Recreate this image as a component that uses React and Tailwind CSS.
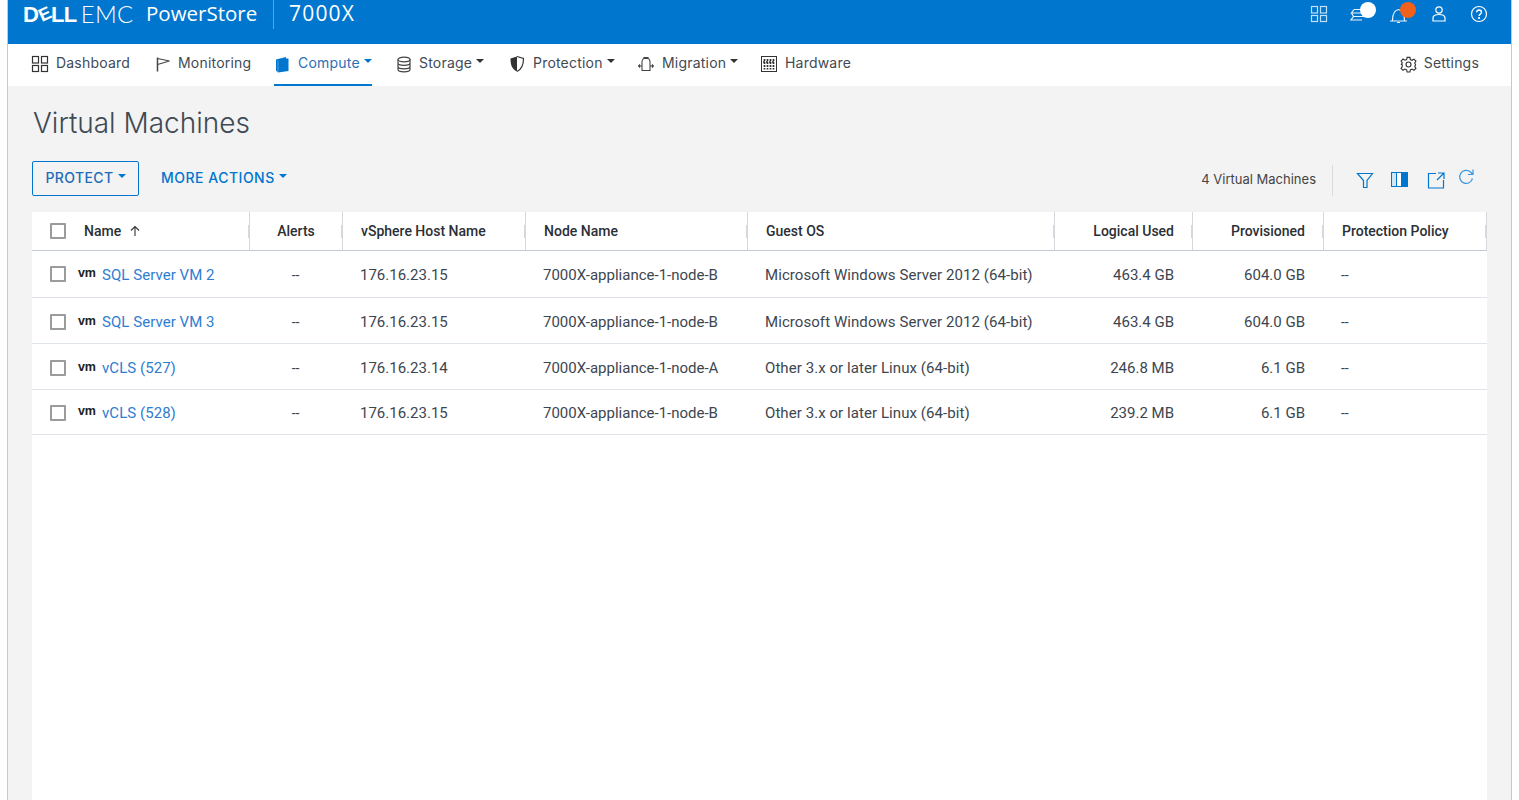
import React from "react";

const Caret = ({ c = "border-t-[#333]", t = "top-[-2px]" }) => (
  <span className={`inline-block w-0 h-0 border-x-[4px] border-x-transparent border-t-[4px] ${c} ml-[4px] relative ${t}`} />
);

const S = ({ children, w = 20, h = 20, vb = "0 0 20 20", color = "#333", sw = 1.2, cls = "" }) => (
  <svg width={w} height={h} viewBox={vb} fill="none" stroke={color} strokeWidth={sw} className={`shrink-0 ${cls}`}>{children}</svg>
);

const Grid4 = ({ color }) => (
  <S color={color} w={18} h={18} vb="0 0 18 18">
    <rect x="1.5" y="1.5" width="6" height="6.5" /><rect x="10.5" y="1.5" width="6" height="6.5" />
    <rect x="1.5" y="10.5" width="6" height="6" /><rect x="10.5" y="10.5" width="6" height="6" />
  </S>
);

const Nav = ({ icon, label, caret, active, gap = "gap-[7px]" }) => (
  <div className={`h-full flex items-center ${gap} border-b-2 ${active ? "border-[#0076ce] text-[#2c6fb5]" : "border-transparent text-[#3f4a55]"}`}>
    <span className="block">{icon}</span>
    <span className="flex items-center relative top-[-2px] tracking-[0.2px]">{label}{caret && <Caret t="top-[-1px]" c={active ? "border-t-[#0076ce]" : "border-t-[#333]"} />}</span>
  </div>
);

const columns = "grid-cols-[218px_93px_183px_222px_307px_138px_131px_163px]";

const rows = [
  ["SQL Server VM 2", "176.16.23.15", "7000X-appliance-1-node-B", "Microsoft Windows Server 2012 (64-bit)", "463.4 GB", "604.0 GB", "h-[47px] pt-[2px]", "top-[-1px]"],
  ["SQL Server VM 3", "176.16.23.15", "7000X-appliance-1-node-B", "Microsoft Windows Server 2012 (64-bit)", "463.4 GB", "604.0 GB", "h-[46px] pt-[4px]", "top-[-1px]"],
  ["vCLS (527)", "176.16.23.14", "7000X-appliance-1-node-A", "Other 3.x or later Linux (64-bit)", "246.8 MB", "6.1 GB", "h-[46px] pt-[4px]", "top-[-1px]"],
  ["vCLS (528)", "176.16.23.15", "7000X-appliance-1-node-B", "Other 3.x or later Linux (64-bit)", "239.2 MB", "6.1 GB", "h-[45px] pt-[2px]", "top-0"],
];

const Check = () => <span className="block w-[16px] h-[16px] border-2 border-[#9b9b9b] rounded-[1px] bg-white shrink-0" />;

const Head = ({ children, cls = "" }) => (
  <div className={`relative flex items-center h-full border-r border-[#d5d9de] text-[14px] font-medium text-[#2b2f36] ${cls}`}>
    {children}
    <span className="absolute right-[-1px] top-[13px] w-[2px] h-[13px] bg-[#d5d9de]" />
  </div>
);

export default function App() {
  return (
    <div className="flex w-full h-[800px] overflow-hidden bg-white" style={{ fontFamily: "Roboto, sans-serif" }}>
      <div className="w-[8px] shrink-0 border-r border-[#c8c8c8]" />
      <div className="w-[1503px] shrink-0 flex flex-col">
        <header className="h-[44px] shrink-0 bg-[#0076ce] flex text-white">
          <div className="flex items-start h-full">
            <div className="ml-[15px] mt-[3px] flex items-center w-[110px] h-[22px] whitespace-nowrap">
              <span className="font-bold text-[22px]" style={{ fontFamily: "'Liberation Sans', sans-serif" }}>D</span>
              <span className="font-bold inline-block rotate-[-25deg] text-[18px]" style={{ fontFamily: "'Liberation Sans', sans-serif" }}>E</span>
              <span className="font-bold text-[22px] tracking-[-0.5px]" style={{ fontFamily: "'Liberation Sans', sans-serif" }}>LL</span>
              <span className="font-light ml-[4px] text-[24px] tracking-[0.2px]" style={{ fontFamily: "Lato, sans-serif" }}>EMC</span>
            </div>
            <div className="ml-[13px] text-[20.500px] leading-[27px] w-[127px]" style={{ fontFamily: "'Open Sans', sans-serif" }}>PowerStore</div>
            <div className="w-px h-[29px] bg-[#5aa6e0]" />
            <div className="ml-[15px] text-[21px] leading-[26px] tracking-[1.200px]" style={{ fontFamily: "'Open Sans', sans-serif" }}>7000X</div>
          </div>
          <div className="ml-auto flex items-start pt-[5px] pr-[23px]">
            <div className="mr-[22px]"><Grid4 color="#bfe0f7" /></div>
            <div className="relative mr-[22px] w-[18px] h-[18px]">
              <S color="#e8f4fc" w={18} h={18} vb="0 0 18 18">
                <path d="M4 4.500h11M4 4.500l-2.500 3.500h12M1.500 8l2 3.500h11M3.500 11.500l-2.500 3.500h11" />
              </S>
              <span className="absolute left-[10px] top-[-3px] w-[16px] h-[16px] rounded-full bg-white" />
            </div>
            <div className="relative mr-[22px] w-[18px] h-[18px]">
              <S color="#e8f4fc" w={18} h={18} vb="0 0 18 18">
                <path d="M0 16h17M2.500 15.500c0-4 .5-10 6-11 5.500 1 6 7 6 11M7 17.500h3" />
              </S>
              <span className="absolute left-[10px] top-[-3px] w-[16px] h-[16px] rounded-full bg-[#f2611c]" />
            </div>
            <div className="mr-[22px]">
              <S color="#fff" w={18} h={18} vb="0 0 18 18">
                <circle cx="9" cy="5" r="3.200" /><path d="M3 16v-3c0-2 2-3.500 6-3.500s6 1.500 6 3.500v3z" />
              </S>
            </div>
            <S color="#fff" w={18} h={18} vb="0 0 18 18">
              <circle cx="9" cy="9" r="7.500" />
              <path d="M6.700 7.200c0-3 4.800-3 4.800 0 0 2-2.400 1.800-2.400 3.700" strokeWidth="1.400" />
              <circle cx="9" cy="13" r=".5" fill="#fff" />
            </S>
          </div>
        </header>

        <nav className="h-[42px] shrink-0 bg-white flex items-stretch pl-[23px] pr-[32px] text-[14px] whitespace-nowrap" style={{ fontFamily: "Inter, sans-serif" }}>
          <div className="w-[124px]"><Nav gap="gap-[7px]" label="Dashboard" icon={<Grid4 color="#333" />} /></div>
          <div className="w-[119px]">
            <Nav gap="gap-[7px]" label="Monitoring" icon={
              <S w={16} h={18} vb="0 0 16 18" color="#444"><path d="M2.500 2.500v14" strokeWidth="1.500" /><path d="M2.500 3.500l12 2.500-12 3.500" /></S>} />
          </div>
          <div className="w-[98px]">
            <Nav active gap="gap-[8px]" label="Compute" caret icon={
              <svg width="15" height="18" viewBox="0 0 15 18" className="shrink-0 ml-[1px]"><path d="M1 4.500 11 2v1.500h2.500v12.500L3 17.500 1 15.500z" fill="#0076ce" /><path d="M3 5.500v11.500" stroke="#7fbce8" strokeWidth=".6" /></svg>} />
          </div>
          <div className="w-[24px]" />
          <div className="w-[113px]">
            <Nav gap="gap-[7px]" label="Storage" caret icon={
              <S w={16} h={18} vb="0 0 16 18" color="#444"><ellipse cx="8" cy="4.500" rx="6" ry="2.300" /><path d="M2 4.500v10c0 1.300 2.700 2.300 6 2.300s6-1 6-2.300v-10M2 8c0 1.300 2.700 2.300 6 2.300S14 9.300 14 8M2 11.500c0 1.300 2.700 2.300 6 2.300s6-1 6-2.300" /></S>} />
          </div>
          <div className="w-[129px]">
            <Nav gap="gap-[8px]" label="Protection" caret icon={
              <svg width="16" height="18" viewBox="0 0 16 18" className="shrink-0"><path d="M8 1.500 1.500 3.500c0 6 1 10.500 6.500 13z" fill="#333" /><path d="M8 1.500l6.500 2c0 6-1 10.500-6.500 13" fill="none" stroke="#333" strokeWidth="1.200" /></svg>} />
          </div>
          <div className="w-[123px]">
            <Nav gap="gap-[8px]" label="Migration" caret icon={
              <S w={16} h={18} vb="0 0 16 18" color="#444" sw={1.100}><path d="M4 7.500c0-2.500 1-4 2.500-4h3C11 3.500 12 5 12 7.500V15.500H4zM6 3.500v-1h4v1M.500 11H4M12 11h3.500M2 9.500.500 11 2 12.500M14 9.500l1.500 1.500L14 12.500" /></S>} />
          </div>
          <div>
            <Nav gap="gap-[8px]" label="Hardware" icon={
              <S w={16} h={16} vb="0 0 16 16" color="#333" sw={1}><rect x=".5" y=".5" width="15" height="15" /><path d="M3.500 3v10.500M6.500 3v10.500M9.500 3v10.500M12.500 3v10.500M2 6h12" strokeWidth="1.700" strokeDasharray="2 1" /></S>} />
          </div>
          <div className="ml-auto">
            <Nav gap="gap-[7px]" label="Settings" icon={
              <S w={17} h={17} vb="0 0 24 24" color="#333" sw={1.600}>
                <circle cx="12" cy="12" r="3.500" />
                <path d="M10 2h4l.6 3 2.500 1.100 2.600-1.700 2.800 2.800-1.700 2.600L22 12.300l0 0 0 0-1.200 2.500 1.700 2.600-2.800 2.800-2.600-1.700-2.500 1.100-.6 3h-4l-.6-3-2.500-1.100-2.600 1.700-2.800-2.800 1.700-2.600L3.100 12.300 2 12l0 0 1.200-2.400-1.700-2.600 2.800-2.800 2.600 1.700L9.400 5z" />
              </S>} />
          </div>
        </nav>

        <main className="flex-1 bg-[#f3f3f3] pl-[24px] pr-[24px] min-h-0">
          <h1 className="pt-[19px] pl-[1px] text-[28px] font-light leading-[36px] text-[#3f4a55] h-[75px]" style={{ fontFamily: "Inter, sans-serif" }}>Virtual Machines</h1>

          <div className="flex h-[51px] items-start" >
            <button className="h-[35px] w-[107px] border border-[#0076ce] rounded-[2px] text-[14px] font-medium text-[#1c6cb8] tracking-[0.4px] flex items-center justify-center pb-[2px]" style={{ fontFamily: "Inter, sans-serif" }}>
              PROTECT<Caret c="border-t-[#0076ce]" />
            </button>
            <button className="ml-[22px] h-[35px] text-[14px] font-medium text-[#0076ce] tracking-[0.5px] flex items-center pb-[2px]" style={{ fontFamily: "Inter, sans-serif" }}>
              MORE ACTIONS<Caret c="border-t-[#0076ce]" />
            </button>
            <div className="ml-auto flex items-start">
              <span className="text-[13px] leading-[36px] text-[#444]" style={{ fontFamily: "Inter, sans-serif" }}>4 Virtual Machines</span>
              <span className="w-px h-[31px] bg-[#dcdcdc] ml-[16px] mt-[4px]" />
              <div className="ml-[23px] mt-[10px] flex items-start pr-[12px]">
                <S w={18} h={18} vb="0 0 18 18" color="#0076ce"><path d="M1.500 2.500h15L11 9.500V16.500H7.500V9.500z" /></S>
                <div className="ml-[17px] mt-[1px] w-[17px] h-[15px] border border-[#0076ce] flex">
                  <span className="w-[5px] bg-[#cfe6f7] border-r border-[#0076ce]" />
                  <span className="w-[5px] bg-white border-r border-[#0076ce]" />
                  <span className="flex-1 bg-[#0076ce]" />
                </div>
                <div className="ml-[19px]">
                  <S w={18} h={18} vb="0 0 18 18" color="#0076ce"><path d="M9 2.500H1.500V17h15V9M10 9l6.500-6.500M11 2h6v6" /></S>
                </div>
                <div className="ml-[12px] mt-[-3px]">
                  <S w={18} h={18} vb="0 0 18 18" color="#3b96dc"><path d="M15.500 10.500a6.500 6.500 0 1 1-2-6.500L16 6.500M16 1.500v5h-5" /></S>
                </div>
              </div>
            </div>
          </div>

          <div className="bg-white h-[588px] text-[15px] text-[#3d4650]">
            <div className={`grid ${columns} h-[39px] border-b border-[#c3cad3]`}>
              <Head cls="pl-[18px]"><Check /><span className="ml-[18px]">Name</span>
                <svg width="12" height="12" viewBox="0 0 12 12" fill="none" stroke="#333" strokeWidth="1.100" className="ml-[8px]"><path d="M6 11V1.500M2 5.500l4-4 4 4" /></svg>
              </Head>
              <Head cls="justify-center">Alerts</Head>
              <Head cls="pl-[18px]">vSphere Host Name</Head>
              <Head cls="pl-[18px]">Node Name</Head>
              <Head cls="pl-[18px]">Guest OS</Head>
              <Head cls="justify-end pr-[18px]">Logical Used</Head>
              <Head cls="justify-end pr-[18px]">Provisioned</Head>
              <Head cls="pl-[18px]">Protection Policy</Head>
            </div>
            {rows.map((r, i) => (
              <div key={i} className={`grid ${columns} ${r[6]} items-center border-b border-[#dfe4ea]`}>
                <div className="flex items-center pl-[18px]">
                  <span className={`relative ${r[7]}`}><Check /></span>
                  <span className="ml-[12px] w-[24px] text-[12.500px] leading-[14px] font-bold tracking-[-0.3px] text-[#222] relative top-[-2px]" style={{ fontFamily: "'Liberation Sans', sans-serif" }}>vm</span>
                  <a className="text-[#2e7dd2] tracking-[0.05px]">{r[0]}</a>
                </div>
                <div className="text-center text-[14px] pr-[2px]">--</div>
                <div className="pl-[17px]">{r[1]}</div>
                <div className="pl-[17px]">{r[2]}</div>
                <div className="pl-[17px] tracking-[0.07px]">{r[3]}</div>
                <div className="text-right pr-[19px]">{r[4]}</div>
                <div className="text-right pr-[19px]">{r[5]}</div>
                <div className="pl-[17px] text-[14px]">--</div>
              </div>
            ))}
          </div>
        </main>
      </div>
      <div className="flex-1 border-l border-[#c8c8c8]" />
    </div>
  );
}
